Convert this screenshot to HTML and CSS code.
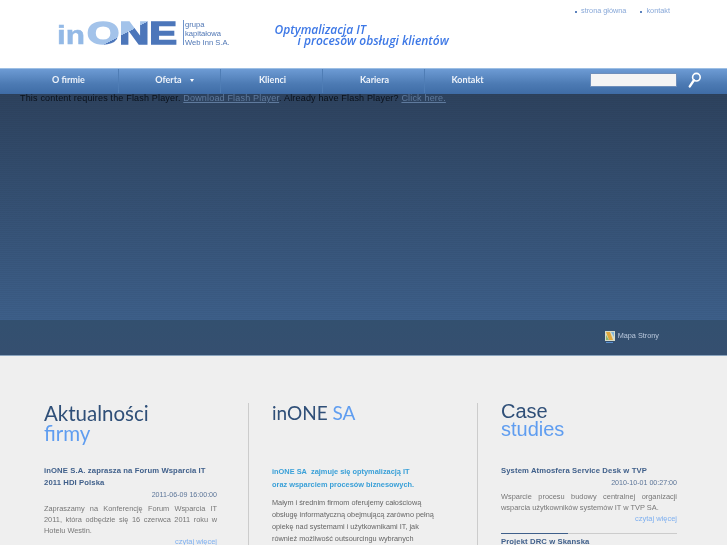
FILE: index.html
```html
<!DOCTYPE html>
<html lang="pl">
<head>
<meta charset="utf-8">
<title>inONE</title>
<link rel="stylesheet" href="styles.css">
</head>
<body>
<header class="top">
  <div class="logo">
    <svg class="logo-mark" width="122" height="27" viewBox="0 0 122 27">
      <defs>
        <linearGradient id="logoFill" gradientUnits="userSpaceOnUse" x1="46" y1="-29" x2="92" y2="57">
          <stop offset="0.5" stop-color="#a3c3ea"/>
          <stop offset="0.5" stop-color="#4c76ba"/>
        </linearGradient>
      </defs>
      <text class="logo-in" x="0" y="25" textLength="28" lengthAdjust="spacingAndGlyphs">in</text>
      <text class="logo-one" x="30" y="25.2" textLength="90" lengthAdjust="spacingAndGlyphs" fill="url(#logoFill)" stroke="url(#logoFill)">ONE</text>
    </svg>
    <span class="logo-sub">grupa<br>kapitałowa<br>Web Inn S.A.</span>
  </div>
  <div class="slogan"><div>Optymalizacja IT</div><div class="slogan-2">i procesów obsługi klientów</div></div>
  <nav class="toplinks"><a>strona główna</a><a>kontakt</a></nav>
</header>
<nav class="menu">
  <ul class="menu-list">
    <li>O firmie</li>
    <li class="has-sub">Oferta <span class="caret"></span></li>
    <li>Klienci</li>
    <li>Kariera</li>
    <li class="last">Kontakt</li>
  </ul>
  <div class="search">
    <span class="search-input"></span>
    <svg class="search-icon" width="13" height="16" viewBox="0 0 13 16"><circle cx="8.4" cy="5.2" r="3.8" fill="none" stroke="#fff" stroke-width="1.6"/><path d="M6 8.2 1.8 14.4" stroke="#fff" stroke-width="2.4" stroke-linecap="round"/></svg>
  </div>
</nav>
<section class="flash">
  <p class="flash-msg">This content requires the Flash Player. <a>Download Flash Player</a>. Already have Flash Player? <a>Click here.</a></p>
</section>
<section class="strip">
  <a class="sitemap">
    <svg class="map-icon" width="10" height="12" viewBox="0 0 10 12"><rect width="10" height="10" fill="#d8dcc8"/><path d="M1 1h4l3 8H4z" fill="#e0a83c"/><path d="M6 1h3v5z" fill="#7fb4d8"/><path d="M1 4l3 5H1z" fill="#8fb36a"/><rect x="1" y="11" width="7" height="1" fill="#5a8fd0"/></svg>
    Mapa Strony
  </a>
</section>
<main class="content">
  <section class="col col-news">
    <h2 class="head"><span class="head-a">Aktualności</span><span class="head-b">firmy</span></h2>
    <h3 class="title">inONE S.A. zaprasza na Forum Wsparcia IT 2011 HDI Polska</h3>
    <div class="date">2011-06-09 16:00:00</div>
    <p class="text">Zapraszamy na Konferencję Forum Wsparcia IT 2011, która odbędzie się 16 czerwca 2011 roku w Hotelu Westin.</p>
    <a class="more">czytaj więcej</a>
  </section>
  <section class="col col-about">
    <h2 class="head head-one"><span class="head-a">inONE</span> <span class="head-b">SA</span></h2>
    <p class="lead">inONE SA&nbsp; zajmuje się optymalizacją IT<br>oraz wsparciem procesów biznesowych.</p>
    <p class="body">Małym i średnim firmom oferujemy całościową obsługę informatyczną obejmującą zarówno pełną opiekę nad systemami i użytkownikami IT, jak również możliwość outsourcingu wybranych</p>
  </section>
  <section class="col col-case">
    <h2 class="head head-case"><span class="head-a">Case</span><span class="head-b">studies</span></h2>
    <h3 class="title">System Atmosfera Service Desk w TVP</h3>
    <div class="date">2010-10-01 00:27:00</div>
    <p class="text">Wsparcie procesu budowy centralnej organizacji wsparcia użytkowników systemów IT w TVP SA.</p>
    <a class="more">czytaj więcej</a>
    <div class="rule"></div>
    <h3 class="title">Projekt DRC w Skanska</h3>
  </section>
</main>
</body>
</html>
```
FILE: styles.css
```css
html, body { margin: 0; padding: 0; height: 545px; overflow: hidden; background: #efefef; font-family: "Liberation Sans", Arial, sans-serif; }
body { filter: blur(0.35px); }
.top { height: 68px; background: #fff; display: flex; position: relative; }
.logo { display: flex; margin: 19px 0 0 57px; height: 27px; }
.logo-mark { display: block; flex: none; margin-right: 4px; overflow: visible; }
.logo-in { font: 700 25px "Liberation Sans", sans-serif; fill: #93b9e6; stroke: #93b9e6; stroke-width: 0.5px; }
.logo-one { font: 700 32px "Liberation Sans", sans-serif; stroke-width: 1.6px; }
.logo-sub { border-left: 1px solid #6f94cb; padding-left: 1px; margin-top: 1px; font: 7.6px/9px "Liberation Sans", sans-serif; color: #4f76b4; height: 25px; white-space: nowrap; }
.slogan { margin: 24px 0 0 45px; color: #3d78e6; font: italic 600 12px/11px "Open Sans", sans-serif; }
.slogan-2 { padding-left: 23px; }
.toplinks { position: absolute; top: 5px; left: 575px; display: flex; gap: 14px; font-size: 7.3px; line-height: 11px; color: #88a8d8; }
.toplinks a::before { content: ""; display: inline-block; width: 2px; height: 2px; background: #5c82bd; margin-right: 4px; }
.menu { height: 26px; background: linear-gradient(#6d9bd4, #4c7ab3 60%, #3f6ca6); border-top: 1px solid #9dbfe4; box-sizing: border-box; display: flex; }
.menu-list { list-style: none; margin: 0; padding: 0 0 0 17px; display: flex; }
.menu-list li { width: 99px; padding-left: 2px; text-align: center; font: 700 9px/22px "Lato", sans-serif; color: #eef3fa; border-right: 1px solid #4f7db5; height: 24px; }
.menu-list li.has-sub { width: 91px; padding-left: 10px; }
.menu-list li.last { border-right: 0; width: 85px; padding-left: 0; }
.caret { display: inline-block; margin-left: 6px; border: 2px solid transparent; border-top: 3px solid #fff; border-bottom: 0; vertical-align: middle; }
.search { display: flex; align-items: center; margin-left: 80px; gap: 11px; height: 22px; }
.search-input { width: 85px; height: 12px; background: #f4f4f4; border: 1px solid #6f8fbb; }
.flash { height: 226px; background: repeating-linear-gradient(rgba(0,0,0,.03) 0 1px, transparent 1px 2px), linear-gradient(#2d425e, #3d5f89); }
.flash-msg { margin: 0; padding: 0 0 0 20px; font-size: 9px; line-height: 9px; color: #0a111b; letter-spacing: 0.18px; }
.flash-msg a { color: #5f7a9d; text-decoration: underline; }
.strip { height: 36px; background: linear-gradient(#33506f, #354f70); border-bottom: 1px solid #8aa3bd; box-sizing: border-box; display: flex; justify-content: flex-end; align-items: center; padding: 0 68px 2px 0; }
.sitemap { font-size: 7.3px; line-height: 9px; color: #b9c8dc; display: flex; align-items: flex-start; gap: 3px; }
.content { display: flex; height: 189px; overflow: hidden; }
.col { box-sizing: border-box; margin-top: 47px; }
.col-news { width: 248px; padding: 0 31px 0 44px; }
.col-about { width: 229px; border-left: 1px solid #ccc; padding: 0 40px 0 23px; }
.col-case { flex: 1; border-left: 1px solid #ccc; padding: 0 50px 0 23px; }
.head { margin: 0; height: 62px; font: 400 20.5px/20px "Lato", sans-serif; }
.head span { display: block; }
.head-one { font-size: 19px; }
.head-one span { display: inline; }
.head-case { font: 400 20px/18px "Liberation Sans", sans-serif; margin-top: -1px; height: 63px; }
.head-a { color: #2f4f78; }
.head-b { color: #5f9df0; }
.title { margin: 0; font: 700 7.7px/12px "Liberation Sans", sans-serif; color: #3f5f8a; letter-spacing: 0.1px; }
.date { font-size: 7.1px; line-height: 11px; color: #5d7699; text-align: right; margin: 1px 0 2px; }
.text { margin: 0; font-size: 7.4px; line-height: 11px; color: #777; text-align: justify; }
.more { display: block; text-align: right; font-size: 7.5px; line-height: 11px; color: #7fb0f0; }
.lead { margin: 0 0 6px; font-weight: 700; font-size: 7.4px; line-height: 13px; color: #3aa0d8; }
.body { margin: 0; font-size: 7.3px; line-height: 12px; color: #666; }
.rule { height: 1px; background: linear-gradient(90deg, #3f5f8a 0 67px, #ccc 67px); margin: 9px 0 2px; }
```
